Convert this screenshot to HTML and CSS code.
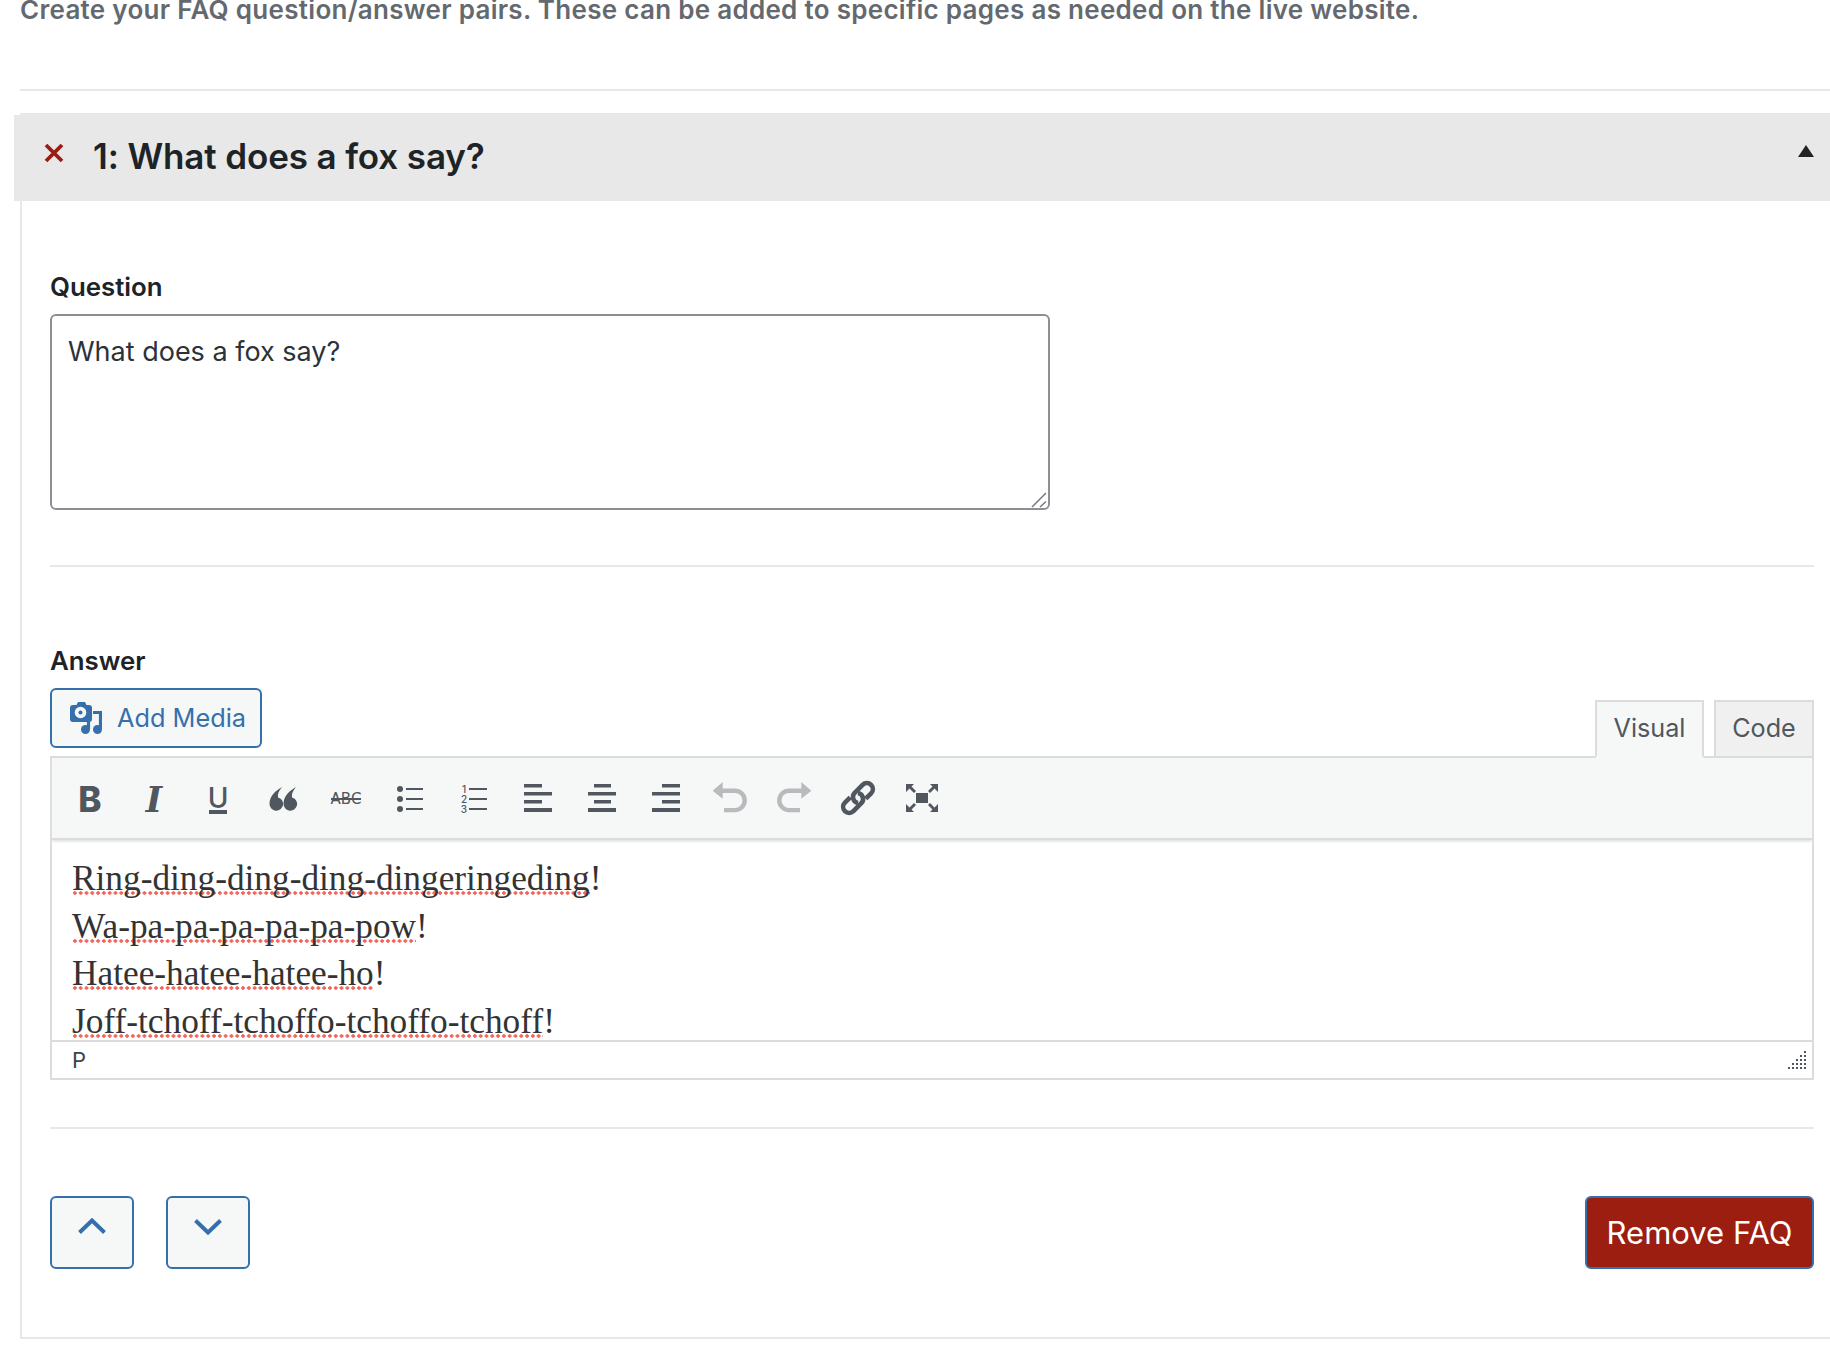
FILE: index.html
```html
<!DOCTYPE html>
<html lang="en">
<head>
<meta charset="utf-8">
<title>FAQ</title>
<link rel="stylesheet" href="styles.css">
</head>
<body>
<main class="page">
  <p class="intro">Create your FAQ question/answer pairs. These can be added to specific pages as needed on the live website.</p>
  <hr class="rule rule-top">
  <section class="panel">
    <header class="panel-head">
      <svg class="remove-x" viewBox="0 0 20 20" width="20" height="20"><path d="M2 2 18 18M18 2 2 18"/></svg>
      <h2 class="panel-title">1: What does a fox say?</h2>
      <span class="caret"></span>
    </header>
    <div class="panel-body">
      <label class="field-label">Question</label>
      <div class="question-wrap">
        <textarea class="question" spellcheck="false">What does a fox say?</textarea>
        <svg class="question-grip" viewBox="0 0 16 16" width="16" height="16"><path d="M1 15 15 1M9 15l6-5.500"/></svg>
      </div>
      <hr class="rule rule-question">
      <label class="field-label">Answer</label>
      <div class="editor-top">
        <button class="media-btn" type="button">
          <svg class="media-icon" viewBox="0 0 32 32" width="32" height="32">
            <path class="blue" d="M3 3h3.500l1.500-3h7l1.500 3H19a3 3 0 0 1 3 3v11a3 3 0 0 1-3 3H3a3 3 0 0 1-3-3V6a3 3 0 0 1 3-3z"/>
            <circle class="white" cx="10.500" cy="10.500" r="5.800"/>
            <circle class="blue" cx="10.500" cy="10.500" r="2"/>
            <circle class="blue" cx="15.500" cy="27.500" r="4.500"/>
            <circle class="blue" cx="27.500" cy="27.500" r="4.500"/>
            <path class="blue-line" d="M18.500 18V27M23 10.500H30.500V27"/>
          </svg>
          <span>Add Media</span>
        </button>
        <div class="tabs">
          <span class="tab tab-active">Visual</span>
          <span class="tab">Code</span>
        </div>
      </div>
      <div class="editor">
        <div class="toolbar">
          <span class="tool"><svg viewBox="0 0 36 36" width="36" height="36"><text class="t-b" x="18" y="32" text-anchor="middle">B</text></svg></span>
          <span class="tool"><svg viewBox="0 0 36 36" width="36" height="36"><text class="t-i" x="18" y="32" text-anchor="middle">I</text></svg></span>
          <span class="tool"><svg viewBox="0 0 36 36" width="36" height="36"><text class="t-u" x="18" y="28" text-anchor="middle">U</text><rect class="ink" x="9" y="30" width="18" height="4"/></svg></span>
          <span class="tool"><svg viewBox="0 0 36 36" width="36" height="36"><path class="ink" d="M18 7c-5 3-12.500 8-12.500 17a6.800 6.800 0 1 0 8.500-6.600c-.5-3 .5-6.400 4-10.400z"/><path class="ink" d="M32 7c-5 3-12.500 8-12.500 17a6.800 6.800 0 1 0 8.500-6.600c-.5-3 .5-6.400 4-10.400z"/></svg></span>
          <span class="tool"><svg viewBox="0 0 36 36" width="36" height="36"><text class="t-s" x="18" y="24" text-anchor="middle">ABC</text><path class="line thin" d="M3 19H33"/></svg></span>
          <span class="tool"><svg viewBox="0 0 36 36" width="36" height="36"><circle class="ink" cx="8" cy="9" r="3"/><circle class="ink" cx="8" cy="19" r="3"/><circle class="ink" cx="8" cy="29" r="3"/><path class="line thin" d="M14 9H31M14 19H31M14 29H31"/></svg></span>
          <span class="tool"><svg viewBox="0 0 36 36" width="36" height="36"><text class="t-n" x="8" y="12.500" text-anchor="middle">1</text><text class="t-n" x="8" y="22.500" text-anchor="middle">2</text><text class="t-n" x="8" y="32.500" text-anchor="middle">3</text><path class="line thin" d="M13 9H31M13 19H31M13 29H31"/></svg></span>
          <span class="tool"><svg viewBox="0 0 36 36" width="36" height="36"><path class="ink" d="M4 4h18v3.500H4zM4 12h28v3.500H4zM4 20h18v3.500H4zM4 28h28v4H4z"/></svg></span>
          <span class="tool"><svg viewBox="0 0 36 36" width="36" height="36"><path class="ink" d="M10 4h17v3.500H10zM4 12h28v3.500H4zM10 20h17v3.500H10zM4 28h28v4H4z"/></svg></span>
          <span class="tool"><svg viewBox="0 0 36 36" width="36" height="36"><path class="ink" d="M14 4h18v3.500H14zM4 12h28v3.500H4zM14 20h18v3.500H14zM4 28h28v4H4z"/></svg></span>
          <span class="tool"><svg viewBox="0 0 36 36" width="36" height="36"><path class="muted" d="M.7 10.700 10.700 2v16.700z"/><path class="muted-line" d="M10 10.700H23a9.700 9.700 0 0 1 0 19.400H12"/></svg></span>
          <span class="tool"><svg viewBox="0 0 36 36" width="36" height="36"><g transform="matrix(-1 0 0 1 36 0)"><path class="muted" d="M.7 10.700 10.700 2v16.700z"/><path class="muted-line" d="M10 10.700H23a9.700 9.700 0 0 1 0 19.400H12"/></g></svg></span>
          <span class="tool"><svg viewBox="0 0 36 36" width="36" height="36"><g transform="rotate(-45 18 18)"><path class="line link" d="M13 12H5.500a6 6 0 0 0 0 12H17a6 6 0 0 0 4.500-9.500"/><path class="line link" d="M23 24h7.500a6 6 0 0 0 0-12H19a6 6 0 0 0-4.500 9.500"/></g></svg></span>
          <span class="tool"><svg viewBox="0 0 36 36" width="36" height="36"><path class="ink" d="M12 13h12v10H12zM2 4h8L7.500 6.500 12 11l-2 2-4.500-4.500L2 12zM34 4h-8l2.500 2.500L24 11l2 2 4.500-4.500L34 12zM2 32h8l-2.500-2.500L12 25l-2-2-4.500 4.500L2 24zM34 32h-8l2.500-2.500L24 25l2-2 4.500 4.500L34 24z"/></svg></span>
        </div>
        <div class="content">
          <p><span class="spell">Ring-ding-ding-ding-dingeringeding</span>!</p>
          <p><span class="spell">Wa-pa-pa-pa-pa-pa-pow</span>!</p>
          <p><span class="spell">Hatee-hatee-hatee-ho</span>!</p>
          <p><span class="spell">Joff-tchoff-tchoffo-tchoffo-tchoff</span>!</p>
        </div>
        <div class="statusbar">
          <span>P</span>
          <svg class="grip" viewBox="0 0 20 20" width="20" height="20"><path d="M17 1h2v2h-2zM17 5h2v2h-2zM13 5h2v2h-2zM17 9h2v2h-2zM13 9h2v2h-2zM9 9h2v2H9zM17 13h2v2h-2zM13 13h2v2h-2zM9 13h2v2H9zM5 13h2v2H5zM17 17h2v2h-2zM13 17h2v2h-2zM9 17h2v2H9zM5 17h2v2H5zM1 17h2v2H1z"/></svg>
        </div>
      </div>
      <hr class="rule rule-answer">
      <div class="actions">
        <div class="move">
          <button class="move-btn" type="button"><svg viewBox="0 0 28 16" width="28" height="16"><path d="M1.500 14.500 14 2.500l12.500 12"/></svg></button>
          <button class="move-btn move-down" type="button"><svg viewBox="0 0 28 16" width="28" height="16"><path d="M1.500 1.500 14 13.500l12.500-12"/></svg></button>
        </div>
        <button class="remove-btn" type="button">Remove FAQ</button>
      </div>
    </div>
  </section>
</main>
</body>
</html>
```
FILE: styles.css
```css
* { box-sizing: border-box; }
html, body { margin: 0; padding: 0; background: #fff; height: 1354px; overflow: hidden; }
body { font-family: Inter, "Noto Sans", sans-serif; color: #1d2327; }
.page { padding-left: 20px; }
.intro { margin: 0; padding-bottom: 8px; font-size: 26px; line-height: 20px; font-weight: 600; color: #646970; letter-spacing: .29px; }
.rule { border: 0; height: 2px; background: #e8e8e8; margin: 0; }
.rule-top { margin-top: 61px; }
.panel { margin-top: 22px; border-left: 2px solid #e8e8e8; border-bottom: 2px solid #e8e8e8; height: 1226px; }
.panel-head { position: relative; margin-left: -2px; height: 88px; background: #e8e8e8; display: flex; align-items: flex-start; }
.panel-head::before { content: ""; position: absolute; left: -6px; top: 2px; bottom: 0; width: 6px; background: #e8e8e8; }
.remove-x { margin: 30px 0 0 24px; flex: none; }
.remove-x path { stroke: #9b1c10; stroke-width: 3.800; fill: none; }
.panel-title { margin: 22px 0 0 29px; font-size: 35px; line-height: 42px; font-weight: 600; color: #1d2327; flex: 1; letter-spacing: -.12px; }
.caret { width: 0; height: 0; border-left: 8px solid transparent; border-right: 8px solid transparent; border-bottom: 12px solid #222; margin: 32px 16px 0 0; }
.panel-body { padding: 71px 16px 0 28px; }
.field-label { display: block; font-size: 25.800px; line-height: 30px; font-weight: 600; color: #1d2327; }
.question-wrap { position: relative; margin-top: 12px; width: 1000px; }
.question { display: block; width: 1000px; height: 196px; border: 2px solid #8c8f94; border-radius: 6px; padding: 20px 16px; font: 400 27px/1.2 Inter, sans-serif; color: #2c3338; background: #fff; outline: 0; resize: none; }
.question-grip { position: absolute; right: 3px; bottom: 2px; }
.question-grip path { fill: none; stroke: #77787c; stroke-width: 1.500; }
.rule-question { margin: 55px 0 79px; }
.editor-top { margin-top: 12px; height: 68px; display: flex; justify-content: space-between; align-items: flex-start; }
.media-btn { width: 212px; height: 60px; display: flex; align-items: center; gap: 15px; padding: 0 0 1px 18px; border: 2px solid #3570ad; border-radius: 6px; background: #f6f7f7; color: #3570ad; font: 400 25.300px/1 Inter, sans-serif; }
.media-icon { flex: none; }
.blue { fill: #3570ad; }
.white { fill: #f6f7f7; }
.blue-line { fill: none; stroke: #3570ad; stroke-width: 3.200; }
.tabs { position: relative; z-index: 1; display: flex; gap: 10px; margin-top: 12px; height: 58px; }
.tab { display: flex; align-items: center; justify-content: center; padding-bottom: 3px; height: 58px; border: 2px solid #dcdcde; background: #f0f0f1; color: #50575e; font-size: 25.200px; width: 100px; }
.tab-active { width: 109px; background: #f6f7f7; border-bottom-color: #f6f7f7; }
.editor { border: 2px solid #dcdcde; height: 324px; display: flex; flex-direction: column; }
.toolbar { height: 82px; flex: none; background: #f6f7f7; display: flex; align-items: center; padding: 0 0 0 6px; border-bottom: 2px solid #dcdcde; box-shadow: 0 2px 2px #e6e7e8; position: relative; }
.tool { width: 64px; height: 36px; display: flex; justify-content: center; align-items: center; }
.tool svg { display: block; overflow: visible; }
.ink { fill: #50575e; }
.line { stroke: #50575e; fill: none; }
.thin { stroke-width: 2; }
.link { stroke-width: 4.600; }
.muted { fill: #b8babd; }
.muted-line { fill: none; stroke: #b8babd; stroke-width: 4.400; }
.t-b { font: 800 35px Inter, sans-serif; fill: #50575e; }
.t-i { font: italic 700 35px "DejaVu Serif", serif; fill: #50575e; }
.t-u { font: 500 28px Inter, sans-serif; fill: #50575e; }
.t-s { font: 400 15px "DejaVu Sans", sans-serif; fill: #50575e; }
.t-n { font: 500 10px Inter, sans-serif; fill: #50575e; }
.content { flex: 1; min-height: 0; overflow: hidden; padding: 15px 0 0 20px; font: 400 35.300px/47.600px "Liberation Serif", serif; color: #333; background: #fff; }
.content p { margin: 0; }
.spell { background-image: radial-gradient(circle at 50% 50%, #f2665c 1.500px, transparent 2px); background-size: 5.800px 4px; background-repeat: repeat-x; background-position: 0 calc(100% - 3px); }
.statusbar { height: 38px; flex: none; border-top: 2px solid #dcdcde; background: #fff; display: flex; justify-content: space-between; align-items: center; padding: 0 5px 0 20px; font-size: 22px; color: #3c434a; }
.grip { fill: #50575e; }
.rule-answer { margin: 47px 0 67px; }
.actions { display: flex; justify-content: space-between; }
.move { display: flex; gap: 32px; }
.move-btn { width: 84px; height: 73px; padding: 0 0 14px; border: 2px solid #3570ad; border-radius: 6px; background: #f6f7f7; display: flex; align-items: center; justify-content: center; }
.move-down { padding-bottom: 11px; }
.move-btn path { fill: none; stroke: #3570ad; stroke-width: 4; }
.remove-btn { width: 229px; height: 73px; border: 2px solid #3570ad; border-radius: 6px; background: #9b1e10; color: #fff; font: 400 31px/1 Inter, sans-serif; padding: 0; }
```
